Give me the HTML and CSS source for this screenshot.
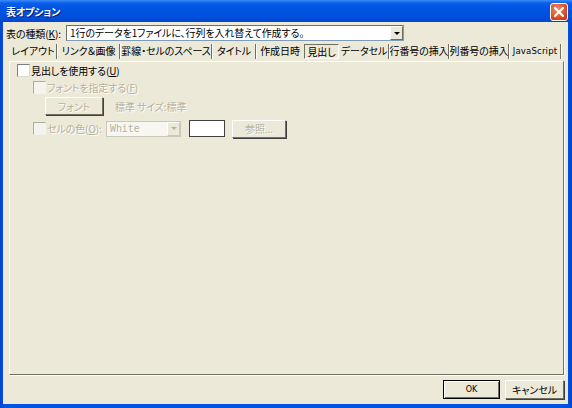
FILE: index.html
```html
<!DOCTYPE html>
<html lang="ja">
<head>
  <meta charset="UTF-8">
  <title>表オプション</title>
  <link rel="stylesheet" href="styles.css">
</head>
<body>

<div class="window">
  <div class="titlebar">
    <span class="title">表オプション</span>
    <span class="close-btn">
      <svg width="10" height="10" viewBox="0 0 10 10">
        <path d="M1 1 L9 9 M9 1 L1 9" stroke="#fff" stroke-width="2" stroke-linecap="square"/>
      </svg>
    </span>
  </div>

  <div class="client">
    <!-- 表の種類 -->
    <div class="kind-row">
      <span class="kind-label">表の種類(<u>K</u>):</span>
      <div class="combo kind-combo">
        <span class="combo-text">1行のデータを1ファイルに、行列を入れ替えて作成する。</span>
        <span class="combo-arrow"><span class="tri"></span></span>
      </div>
    </div>

    <!-- タブ -->
    <div class="tabs">
      <span class="tab t1">レイアウト</span>
      <span class="tab t2">リンク＆画像</span>
      <span class="tab t3">罫線・セルのスペース</span>
      <span class="tab t4">タイトル</span>
      <span class="tab t5">作成日時</span>
      <span class="tab t6 active">見出し</span>
      <span class="tab t7">データセル</span>
      <span class="tab t8">行番号の挿入</span>
      <span class="tab t9">列番号の挿入</span>
      <span class="tab t10 latin">JavaScript</span>
    </div>

    <!-- 見出しタブの中身 -->
    <div class="panel">
      <div class="row row-use">
        <span class="check"></span>
        <span>見出しを使用する(<u>U</u>)</span>
      </div>
      <div class="row row-font disabled">
        <span class="check"></span>
        <span>フォントを指定する(<u>F</u>)</span>
      </div>
      <div class="row row-fontbtn disabled">
        <span class="btn btn-font">フォント</span>
        <span class="font-info">標準 サイズ:標準</span>
      </div>
      <div class="row row-color disabled">
        <span class="check"></span>
        <span class="color-label">セルの色(<u>O</u>):</span>
        <div class="combo color-combo">
          <span class="combo-text mono">White</span>
          <span class="combo-arrow"><span class="tri"></span></span>
        </div>
        <span class="swatch"></span>
        <span class="btn btn-ref">参照...</span>
      </div>
    </div>

    <div class="footer">
      <span class="btn btn-default">OK</span>
      <span class="btn btn-cancel">キャンセル</span>
    </div>
  </div>
</div>

</body>
</html>
```

FILE: styles.css
```css
:root {
  --face: #ECE9D8;
  --dark: #716F64;
  --gray-text: #B4B19F;
}

* {
  box-sizing: border-box;
}

body {
  margin: 0;
  width: 572px;
  height: 408px;
  overflow: hidden;
  font-family: "Noto Sans CJK JP", "Noto Sans", sans-serif;
  font-size: 10px;
  font-feature-settings: "palt";
  letter-spacing: -0.1px;
  color: #000;
}

u {
  text-decoration: underline;
  text-underline-offset: 1px;
}

/* ウィンドウ枠 */
.window {
  width: 572px;
  height: 408px;
  display: flex;
  flex-direction: column;
  background: linear-gradient(to right, #0841C8, #0054E3 4px, #0054E3 calc(100% - 4px), #0841C8);
  padding: 0 4px 4px 3px;
}

.titlebar {
  height: 22px;
  margin: 0 -4px 0 -3px;
  padding: 0 4px 0 6px;
  display: flex;
  align-items: center;
  justify-content: space-between;
  background: linear-gradient(to bottom, #3C8CF8 0, #0A5EEA 3px, #0054E3 8px, #0050DC 16px, #0046D0 22px);
}

.title {
  color: #fff;
  font-weight: bold;
  font-size: 10px;
  letter-spacing: -0.2px;
  text-shadow: 1px 1px 0 #0A1E6E;
}

.close-btn {
  width: 18px;
  height: 18px;
  border: 1px solid #fff;
  border-radius: 3px;
  background: radial-gradient(circle at 40% 35%, #F09070, #D8421C 70%, #B83010);
  display: flex;
  align-items: center;
  justify-content: center;
  margin-top: 1px;
}

.client {
  flex: 1;
  background: var(--face);
  display: flex;
  flex-direction: column;
  padding: 3px 0 0 3px;
  white-space: nowrap;
}

/* 表の種類 */
.kind-row {
  display: flex;
  align-items: center;
  height: 16px;
}

.kind-label {
  width: 60px;
  flex-shrink: 0;
}

.combo {
  display: flex;
  height: 16px;
  background: #fff;
  border: 1px solid #7F9DB9;
  border-top-color: var(--dark);
  border-left-color: var(--dark);
}

.kind-combo {
  width: 338px;
}

.combo-text {
  flex: 1;
  padding-left: 3px;
  line-height: 14px;
  overflow: hidden;
}

.combo-arrow {
  width: 13px;
  flex-shrink: 0;
  background: var(--face);
  border: 1px solid;
  border-color: #fff var(--dark) var(--dark) #fff;
  display: flex;
  align-items: center;
  justify-content: center;
}

.tri {
  width: 0;
  height: 0;
  border-left: 3px solid transparent;
  border-right: 3px solid transparent;
  border-top: 3px solid #000;
}

/* タブ */
.tabs {
  display: flex;
  align-items: center;
  height: 15px;
  margin-top: 3px;
  padding-left: 4px;
}

.tab {
  height: 15px;
  line-height: 14px;
  flex-shrink: 0;
  display: flex;
  justify-content: center;
  border-right: 1px solid var(--dark);
  box-shadow: 1px 0 0 #fff;
  margin-right: 1px;
}

.t1 { width: 47px; }
.t2 { width: 62px; }
.t3 { width: 91px; }
.t4 { width: 43px; }
.t5 { width: 46px; border-right: none; box-shadow: none; margin-right: 1px; }
.t6 { width: 35px; }
.t7 { width: 49px; }
.t8 { width: 59px; }
.t9 { width: 59px; }
.t10 { width: 51px; }

.tab.active {
  border: 1px solid;
  border-color: var(--dark) #fff #fff var(--dark);
  box-shadow: none;
  margin-right: 1px;
}

.latin {
  font-family: "DejaVu Sans", sans-serif;
  font-size: 8.5px;
  letter-spacing: 0.2px;
}

/* パネル */
.panel {
  flex: 1;
  margin: 2px 4px 0 3px;
  border: 1px solid;
  border-color: #fff var(--dark) var(--dark) #fff;
  box-shadow: 1px 1px 0 #fff;
  padding: 2px 0 0 7px;
}

.row {
  display: flex;
  align-items: center;
  height: 13px;
}

.check {
  width: 13px;
  height: 13px;
  background: #fff;
  border: 1px solid;
  border-color: #7F7F7F #DCDAD0 #DCDAD0 #7F7F7F;
  margin-right: 1px;
  flex-shrink: 0;
}

.disabled {
  color: var(--gray-text);
  text-shadow: 1px 1px 0 #fff;
}

.disabled .check {
  background: #F4F3EE;
  border-color: #B0AE9F #F4F3EE #F4F3EE #B0AE9F;
}

.row-font {
  margin-top: 4px;
  padding-left: 16px;
}

.row-fontbtn {
  margin-top: 3px;
  height: 18px;
  padding-left: 28px;
}

.font-info {
  margin-left: 12px;
}

.row-color {
  margin-top: 5px;
  height: 17px;
  padding-left: 16px;
}

.color-label {
  width: 59px;
  flex-shrink: 0;
}

.color-combo {
  width: 75px;
  height: 16px;
  background: #F7F6F0;
  border-color: #CAC8BB;
}

.mono {
  font-family: "DejaVu Sans Mono", monospace;
  font-size: 10px;
  color: var(--gray-text);
}

.color-combo .combo-arrow {
  border-color: #fff #CAC8BB #CAC8BB #fff;
}

.color-combo .tri {
  border-top-color: var(--gray-text);
}

.swatch {
  width: 36px;
  height: 17px;
  margin-left: 8px;
  background: #fff;
  border: 1px solid #404040;
}

/* ボタン */
.btn {
  display: flex;
  align-items: center;
  justify-content: center;
  height: 18px;
  flex-shrink: 0;
  background: var(--face);
  border: 1px solid;
  border-color: #fff var(--dark) var(--dark) #fff;
  box-shadow: 1px 1px 0 #404040;
}

.btn-font {
  width: 58px;
}

.btn-ref {
  width: 54px;
  margin-left: 7px;
}

.footer {
  display: flex;
  justify-content: flex-end;
  gap: 5px;
  padding: 5px 4px 0 0;
  height: 29px;
}

.btn-default {
  width: 57px;
  height: 19px;
  border: 1px solid #000;
  box-shadow: inset 1px 1px 0 #fff, inset -1px -1px 0 var(--dark);
  font-family: "DejaVu Sans", sans-serif;
  font-size: 8px;
}

.btn-cancel {
  width: 59px;
  height: 19px;
}
```
